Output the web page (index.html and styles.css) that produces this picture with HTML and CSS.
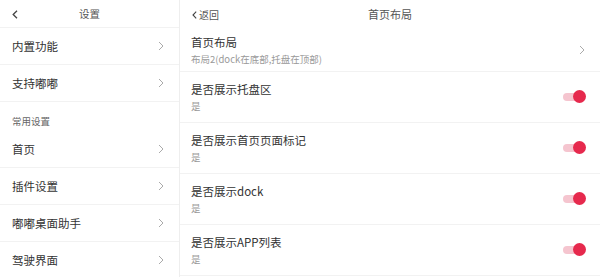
FILE: index.html
```html
<!DOCTYPE html>
<html lang="zh">
<head>
<meta charset="utf-8">
<title>设置</title>
<link rel="stylesheet" href="styles.css">
</head>
<body>
<div class="app">
  <aside class="side">
    <header class="side-head">
      <svg class="back" width="6" height="9" viewBox="0 0 6 9"><path d="M5 0.8 L1.2 4.5 L5 8.2" fill="none" stroke="#444" stroke-width="1.3"/></svg>
      <span class="side-title">设置</span>
    </header>
    <div class="item"><span>内置功能</span><svg class="chev" width="6" height="10" viewBox="0 0 6 10"><path d="M1 1 L5 5 L1 9" fill="none" stroke="#aaa" stroke-width="1"/></svg></div>
    <div class="item"><span>支持嘟嘟</span><svg class="chev" width="6" height="10" viewBox="0 0 6 10"><path d="M1 1 L5 5 L1 9" fill="none" stroke="#aaa" stroke-width="1"/></svg></div>
    <div class="section">常用设置</div>
    <div class="item"><span>首页</span><svg class="chev" width="6" height="10" viewBox="0 0 6 10"><path d="M1 1 L5 5 L1 9" fill="none" stroke="#aaa" stroke-width="1"/></svg></div>
    <div class="item"><span>插件设置</span><svg class="chev" width="6" height="10" viewBox="0 0 6 10"><path d="M1 1 L5 5 L1 9" fill="none" stroke="#aaa" stroke-width="1"/></svg></div>
    <div class="item"><span>嘟嘟桌面助手</span><svg class="chev" width="6" height="10" viewBox="0 0 6 10"><path d="M1 1 L5 5 L1 9" fill="none" stroke="#aaa" stroke-width="1"/></svg></div>
    <div class="item"><span>驾驶界面</span><svg class="chev" width="6" height="10" viewBox="0 0 6 10"><path d="M1 1 L5 5 L1 9" fill="none" stroke="#aaa" stroke-width="1"/></svg></div>
  </aside>
  <main class="main">
    <header class="main-head">
      <span class="back-link"><svg width="5" height="8" viewBox="0 0 5 8"><path d="M4.2 0.6 L1 4 L4.2 7.4" fill="none" stroke="#444" stroke-width="1.1"/></svg>返回</span>
      <span class="main-title">首页布局</span>
    </header>
    <div class="row first">
      <div class="text"><div class="title">首页布局</div><div class="sub">布局2(dock在底部,托盘在顶部)</div></div>
      <svg class="chev" width="6" height="10" viewBox="0 0 6 10"><path d="M1 1 L5 5 L1 9" fill="none" stroke="#aaa" stroke-width="1"/></svg>
    </div>
    <div class="row">
      <div class="text"><div class="title">是否展示托盘区</div><div class="sub">是</div></div>
      <span class="toggle"><span class="knob"></span></span>
    </div>
    <div class="row">
      <div class="text"><div class="title">是否展示首页页面标记</div><div class="sub">是</div></div>
      <span class="toggle"><span class="knob"></span></span>
    </div>
    <div class="row">
      <div class="text"><div class="title">是否展示dock</div><div class="sub">是</div></div>
      <span class="toggle"><span class="knob"></span></span>
    </div>
    <div class="row">
      <div class="text"><div class="title">是否展示APP列表</div><div class="sub">是</div></div>
      <span class="toggle"><span class="knob"></span></span>
    </div>
  </main>
</div>
</body>
</html>
```
FILE: styles.css
```css
* { box-sizing: border-box; }
html, body { margin: 0; padding: 0; background: #fff; }
body {
  font-family: "Noto Sans CJK SC", "Noto Sans", sans-serif;
  color: #333;
  width: 600px;
  height: 277px;
  overflow: hidden;
}
.app { display: flex; height: 277px; }
.side {
  width: 180px;
  flex: none;
  border-right: 1px solid #eeeeee;
}
.side-head {
  height: 28px;
  display: flex;
  align-items: center;
  justify-content: center;
  position: relative;
  border-bottom: 1px solid #f2f2f2;
}
.back { position: absolute; left: 12px; top: 10px; }
.side-title { font-size: 10.5px; color: #555; }
.item {
  height: 37px;
  display: flex;
  align-items: center;
  justify-content: space-between;
  padding: 0 15px 0 12px;
  font-size: 11.5px;
  color: #333;
  border-bottom: 1px solid #f2f2f2;
}
.section {
  height: 29px;
  display: flex;
  align-items: flex-end;
  padding: 0 0 3px 12px;
  font-size: 9.5px;
  color: #666;
}
.main { flex: 1; display: flex; flex-direction: column; }
.main-head {
  height: 28px;
  display: flex;
  align-items: center;
  justify-content: center;
  position: relative;
}
.back-link {
  position: absolute;
  left: 12px;
  top: 7px;
  font-size: 10px;
  color: #555;
  display: flex;
  align-items: center;
  gap: 2px;
}
.main-title { font-size: 11px; color: #555; }
.row {
  height: 51px;
  display: flex;
  align-items: center;
  justify-content: space-between;
  padding: 0 15px 0 11px;
  border-bottom: 1px solid #f2f2f2;
}
.row.first { height: 44px; }
.title { font-size: 11.5px; color: #333; line-height: 16px; }
.sub { font-size: 9.5px; color: #999; line-height: 14px; margin-top: 2px; }
.toggle {
  position: relative;
  width: 22px;
  height: 8px;
  border-radius: 4px;
  background: #f5c5cf;
}
.knob {
  position: absolute;
  right: -1px;
  top: -3px;
  width: 13px;
  height: 13px;
  border-radius: 50%;
  background: #e6294d;
}
```
